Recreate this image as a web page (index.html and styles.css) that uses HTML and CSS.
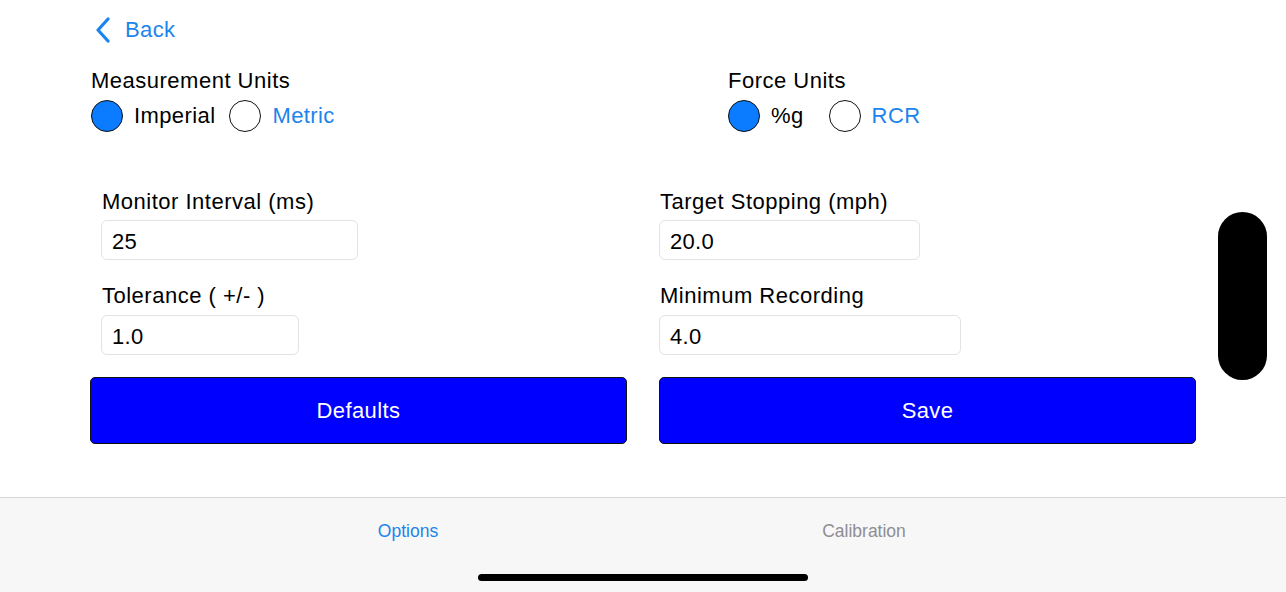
FILE: index.html
```html
<!DOCTYPE html>
<html>
<head>
<meta charset="utf-8">
<link rel="stylesheet" href="styles.css">
</head>
<body>
<div class="screen">
  <main class="content">
    <div class="back">
      <svg class="chev" width="18" height="26" viewBox="0 0 18 26"><path d="M14 2 L4 13 L14 24" fill="none" stroke="#1c84ec" stroke-width="3.2" stroke-linecap="round" stroke-linejoin="round"/></svg>
      <span class="back-text">Back</span>
    </div>
    <div class="units">
      <div class="unit-group">
        <div class="title">Measurement Units</div>
        <div class="radios">
          <div class="opt opt-a"><span class="dot on"></span><span class="opt-label">Imperial</span></div>
          <div class="opt"><span class="dot"></span><span class="opt-label blue">Metric</span></div>
        </div>
      </div>
      <div class="unit-group">
        <div class="title">Force Units</div>
        <div class="radios">
          <div class="opt opt-b"><span class="dot on"></span><span class="opt-label">%g</span></div>
          <div class="opt"><span class="dot"></span><span class="opt-label blue">RCR</span></div>
        </div>
      </div>
    </div>
    <div class="form">
      <div class="col col-left">
        <div class="field">
          <div class="label">Monitor Interval (ms)</div>
          <div class="input w-mon">25</div>
        </div>
        <div class="field second">
          <div class="label">Tolerance ( +/- )</div>
          <div class="input w-tol">1.0</div>
        </div>
      </div>
      <div class="col">
        <div class="field">
          <div class="label">Target Stopping (mph)</div>
          <div class="input w-tgt">20.0</div>
        </div>
        <div class="field second">
          <div class="label">Minimum Recording</div>
          <div class="input w-min">4.0</div>
        </div>
      </div>
      <button class="btn">Defaults</button>
      <button class="btn">Save</button>
    </div>
  </main>
  <div class="pill"></div>
  <nav class="tabbar">
    <div class="tabs">
      <div class="tab active">Options</div>
      <div class="tab">Calibration</div>
    </div>
    <div class="home"></div>
  </nav>
</div>
</body>
</html>
```
FILE: styles.css
```css
* { box-sizing: border-box; }
html, body { margin: 0; padding: 0; background: #fff; }
body { font-family: "Liberation Sans", Arial, sans-serif; color: #000; }
.screen { position: relative; width: 1286px; height: 592px; overflow: hidden; display: flex; flex-direction: column; }
.content { flex: 1; padding-left: 90px; }
.back { height: 60px; display: flex; align-items: center; padding-left: 4px; gap: 13px; }
.chev { display: block; }
.back-text { font-size: 22px; color: #1c84ec; letter-spacing: 0.4px; }
.units { display: grid; grid-template-columns: 637px 400px; margin-top: 8px; padding-left: 1px; }
.title { font-size: 22px; line-height: 26px; height: 26px; letter-spacing: 0.5px; }
.radios { display: flex; align-items: center; margin-top: 6px; height: 32px; }
.opt { display: flex; align-items: center; }
.opt-a { margin-right: 14px; }
.opt-b { margin-right: 25px; }
.dot { width: 32px; height: 32px; border-radius: 50%; border: 1.5px solid #111; background: #fff; margin-right: 11px; }
.dot.on { background: #0b7bff; }
.opt-label { font-size: 22px; letter-spacing: 0.4px; }
.blue { color: #1c84ec; }
.form { display: grid; grid-template-columns: 537px 537px; column-gap: 32px; margin-top: 57px; }
.col-left { padding-left: 11px; }
.col { display: flex; flex-direction: column; }
.label { font-size: 22px; line-height: 26px; height: 26px; padding-left: 1px; letter-spacing: 0.5px; }
.input { margin-top: 5px; height: 40px; border: 1px solid #e3e3e3; border-radius: 6px; font-size: 22px; line-height: 38px; padding: 2px 0 0 10px; letter-spacing: 0.3px; }
.field.second { margin-top: 23px; }
.field.second .input { margin-top: 6px; }
.w-mon { width: 257px; }
.w-tol { width: 198px; }
.w-tgt { width: 261px; }
.w-min { width: 302px; }
.btn { margin-top: 22px; height: 67px; background: #0000ff; color: #fff; border: 1.5px solid #111; border-radius: 5px; font-family: "Liberation Sans", Arial, sans-serif; font-size: 22px; letter-spacing: 0.4px; }
.pill { position: absolute; left: 1218px; top: 212px; width: 49px; height: 168px; background: #000; border-radius: 25px; }
.tabbar { height: 95px; background: #f7f7f7; border-top: 1px solid #d4d4d4; display: flex; flex-direction: column; align-items: center; }
.tabs { width: 100%; display: grid; grid-template-columns: 456px 456px; padding-left: 180px; margin-top: 21px; }
.tab { text-align: center; font-size: 17.5px; line-height: 24px; color: #8e8e93; }
.tab.active { color: #1c84ec; }
.home { margin-top: 31px; width: 330px; height: 7px; border-radius: 4px; background: #000; }
```
